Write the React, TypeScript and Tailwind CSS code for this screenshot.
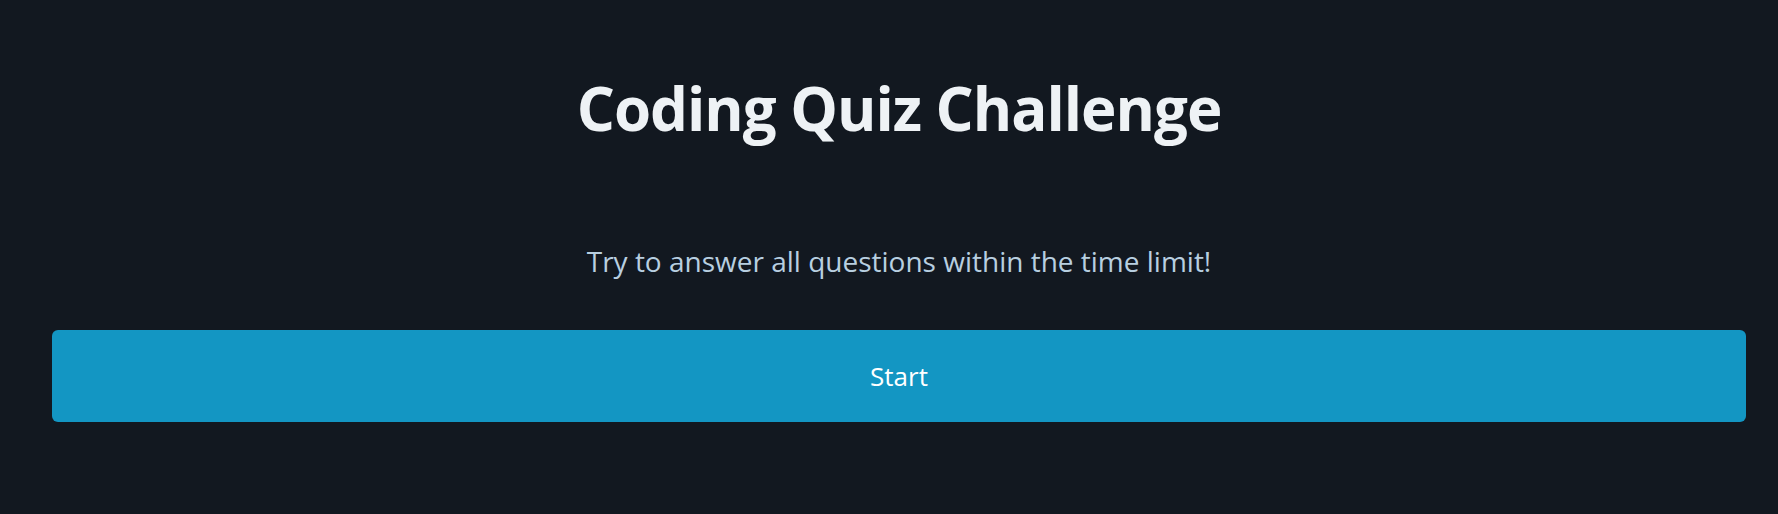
export default function App() {
  return (
    <div
      className="min-h-[514px] w-full bg-[#121820] pl-[52px] pr-[32px] flex flex-col items-center"
      style={{ fontFamily: '"Open Sans", "Noto Sans", sans-serif' }}
    >
      <h1 className="mt-[68px] text-[60px] leading-[80px] font-bold text-[#eef2f5] tracking-[-1px]">
        Coding Quiz Challenge
      </h1>
      <p className="mt-[97px] text-[28px] leading-[32px] text-[#b8cfe0]">
        Try to answer all questions within the time limit!
      </p>
      <button className="mt-[53px] w-full h-[92px] rounded-[6px] bg-[#1396c3] text-white text-[26px]">
        Start
      </button>
    </div>
  );
}
